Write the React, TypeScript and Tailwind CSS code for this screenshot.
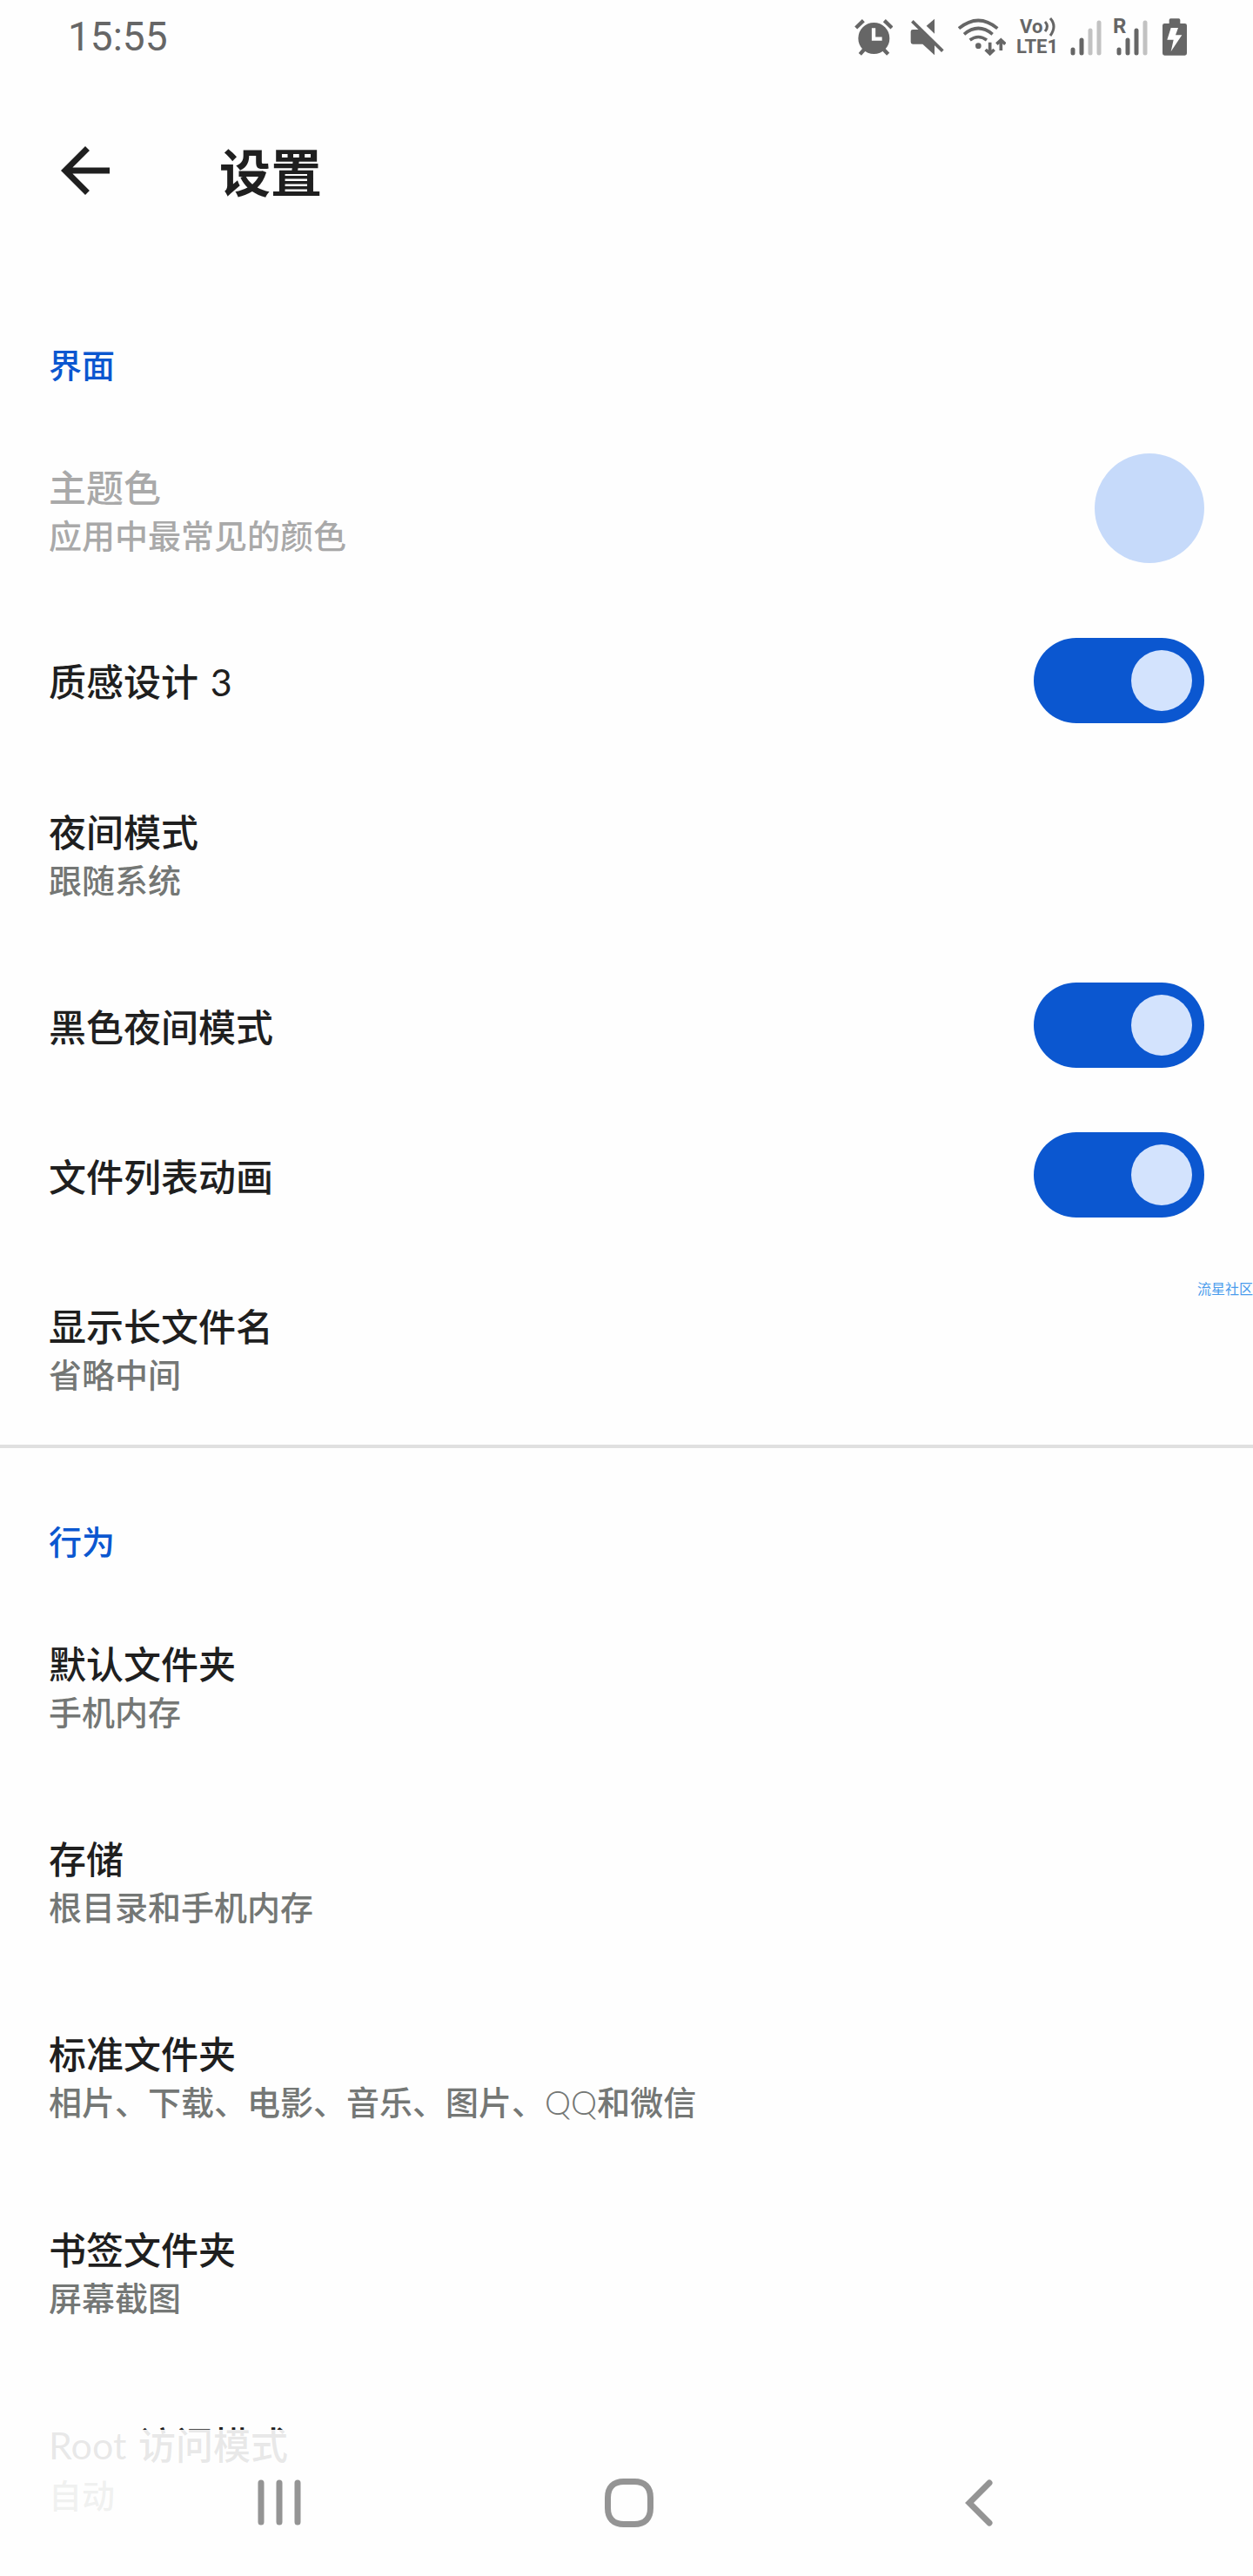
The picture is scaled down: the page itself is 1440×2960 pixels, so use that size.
import { useId, useState } from "react";
import type { ReactNode } from "react";

/* ---------- status bar ---------- */

function AlarmIcon() {
  return (
    <svg className="h-[45px] w-[44px]" viewBox="59 57 132 135" aria-label="闹钟">
      <circle cx="126" cy="129" r="54" fill="#666" />
      <g stroke="#666" strokeWidth="13" fill="none">
        <path d="M64 93 L90 68M188 93 L162 68" />
        <path d="M78 184 L92 168M175 184 L160 168" />
      </g>
      <path d="M125 94V131H154" stroke="#fefefe" strokeWidth="13" fill="none" />
    </svg>
  );
}

function MuteIcon() {
  return (
    <svg className="h-[45px] w-[39px]" viewBox="253 57 117 135" aria-label="静音">
      <path d="M262 99H284L337 151V187L296 149H262Q255 149 255 142V106Q255 99 262 99Z" fill="#666" />
      <path d="M337 62V113L309 86Z" fill="#666" />
      <path d="M260 70L365 173" stroke="#666" strokeWidth="11" />
    </svg>
  );
}

function WifiIcon() {
  return (
    <svg className="h-[45px] w-[55px]" viewBox="420 57 165 135" aria-label="无线网络">
      <g stroke="#666" strokeWidth="11" fill="none">
        <path d="M423 95Q490 40 556 95" />
        <path d="M441 115Q490 74 539 115" />
        <path d="M461 135Q490 114 519 135" />
        <path d="M530 143V180M515 168L530 182L545 168" />
        <path d="M568 171V136M553 149L568 135L583 149" />
      </g>
      <circle cx="490" cy="155" r="10" fill="#666" />
    </svg>
  );
}

function VolteLabel() {
  return (
    <div className="flex w-[50px] flex-col font-[Roboto] text-[22px] leading-[23px] font-bold">
      <div className="flex items-center pl-1">
        <span>Vo</span>
        <svg className="h-[23px] w-[17px]" viewBox="0 0 17 23" fill="none" stroke="#666" strokeWidth="3">
          <path d="M3 6Q8 11 3 17" />
          <path d="M9 2Q17 11 9 22" />
        </svg>
      </div>
      <span>LTE1</span>
    </div>
  );
}

function SignalIcon({ level }: { level: number }) {
  const tops = [29, 18, 7, -2];
  return (
    <svg className="h-[45px] w-[37px]" viewBox="0 0 37 45" strokeWidth="5" strokeLinecap="round" aria-label="信号">
      {tops.map((top, i) => (
        <path
          key={top}
          d={`M${3 + i * 10} ${top + 8}V41`}
          stroke={i < level ? "#666" : "#c2c2c2"}
        />
      ))}
    </svg>
  );
}

function BatteryIcon() {
  return (
    <svg className="h-[45px] w-[28px]" viewBox="1128 57 84 135" aria-label="正在充电">
      <path
        d="M1151 78V66Q1151 61 1156 61H1184Q1189 61 1189 66V78H1205Q1212 78 1212 85V181Q1212 188 1205 188H1135Q1128 188 1128 181V85Q1128 78 1135 78Z"
        fill="#666"
      />
      <path d="M1157 93H1182L1173 118H1195L1157 175L1166 134H1144Z" fill="#fefefe" />
    </svg>
  );
}

function StatusBar() {
  return (
    <div className="flex h-21 items-center justify-between pr-[76px] pl-[78px] text-[#666]">
      <time className="font-[Roboto] text-[46px] leading-none">15:55</time>
      <div className="flex items-center">
        <AlarmIcon />
        <div className="ml-5">
          <MuteIcon />
        </div>
        <div className="ml-4">
          <WifiIcon />
        </div>
        <div className="ml-3">
          <VolteLabel />
        </div>
        <div className="ml-3">
          <SignalIcon level={2} />
        </div>
        <div className="relative ml-4">
          <span className="absolute -top-1 -left-1 font-[Roboto] text-[24px] leading-[28px] font-bold">R</span>
          <SignalIcon level={3} />
        </div>
        <div className="ml-4">
          <BatteryIcon />
        </div>
      </div>
    </div>
  );
}

/* ---------- preference list ---------- */

function Latin({ children }: { children: ReactNode }) {
  return <span className="mx-1 font-[Lato] font-normal first:ml-0">{children}</span>;
}

function RowText({ title, summary, disabled }: { title: ReactNode; summary?: ReactNode; disabled?: boolean }) {
  return (
    <span className="flex min-w-0 flex-1 flex-col">
      <span className={`text-[43px] leading-[60px] font-medium ${disabled ? "text-[#a9a9a9]" : "text-[#1f1f1f]"}`}>
        {title}
      </span>
      {summary && (
        <span className={`text-[38px] leading-[52px] font-medium ${disabled ? "text-[#a9a9a9]" : "text-[#747775]"}`}>
          {summary}
        </span>
      )}
    </span>
  );
}

function Row(props: { title: ReactNode; summary: ReactNode; disabled?: boolean; children?: ReactNode }) {
  return (
    <button type="button" disabled={props.disabled} className="flex w-full items-center px-14 py-14 text-left">
      <RowText title={props.title} summary={props.summary} disabled={props.disabled} />
      {props.children}
    </button>
  );
}

function SwitchRow({ title }: { title: ReactNode }) {
  const id = useId();
  const [on, setOn] = useState(true);
  return (
    <label htmlFor={id} className="flex min-h-[172px] items-center px-14">
      <RowText title={title} />
      <input
        id={id}
        type="checkbox"
        role="switch"
        checked={on}
        onChange={(e) => setOn(e.target.checked)}
        className="flex h-[98px] w-[196px] shrink-0 appearance-none items-center rounded-full bg-[#e1e3e1] px-3.5 before:size-[70px] before:rounded-full before:bg-[#747775] checked:justify-end checked:bg-[#0b57d0] checked:before:bg-[#d3e3fd]"
      />
    </label>
  );
}

function SectionTitle({ children }: { children: ReactNode }) {
  return (
    <h2 className="px-14 pt-20 pb-7 text-[38px] leading-[52px] font-medium text-[#0b57d0]">{children}</h2>
  );
}

/* ---------- system navigation ---------- */

function NavigationBar() {
  return (
    <nav className="fixed inset-x-0 bottom-0 grid h-42 grid-cols-3 bg-[#fefefe]/90 pr-[114px] pl-[120px]">
      <button type="button" aria-label="最近任务" className="flex items-center justify-center">
        <svg className="h-14 w-14" viewBox="0 0 56 56" stroke="#949494" strokeWidth="7" strokeLinecap="round">
          <path d="M7 5V50M28 5V50M49 5V50" />
        </svg>
      </button>
      <button type="button" aria-label="主屏幕" className="flex items-center justify-center">
        <svg className="h-14 w-14" viewBox="0 0 56 56" fill="none" stroke="#949494" strokeWidth="7">
          <path d="M28 3.500H34C46 3.500 52.500 10 52.500 22V34C52.500 46 46 52.500 34 52.500H22C10 52.500 3.500 46 3.500 34V22C3.500 10 10 3.500 22 3.500Z" />
        </svg>
      </button>
      <button type="button" aria-label="返回" className="flex items-center justify-center">
        <svg className="h-14 w-14" viewBox="0 0 56 56" fill="none" stroke="#949494" strokeWidth="7" strokeLinecap="round">
          <path d="M40 5L17 28L40 51" />
        </svg>
      </button>
    </nav>
  );
}

export default function App() {
  return (
    <div
      lang="zh-CN"
      className="min-h-screen overflow-x-hidden bg-[#fefefe] font-['Noto_Sans_CJK_SC',sans-serif] text-[#1f1f1f]"
    >
      <StatusBar />
      <header className="flex h-56 items-center gap-28 px-14">
        <button type="button" aria-label="返回">
          <svg className="size-21" viewBox="0 0 24 24" fill="#1f1f1f">
            <path d="M20 11H7.830l5.590-5.590L12 4l-8 8 8 8 1.410-1.410L7.830 13H20z" />
          </svg>
        </button>
        <h1 className="text-[59px] leading-[80px] font-bold">设置</h1>
      </header>

      <main className="pt-1">
        <section>
          <SectionTitle>界面</SectionTitle>
          <Row title="主题色" summary="应用中最常见的颜色" disabled>
            <span className="-my-2 size-[126px] shrink-0 rounded-full bg-[#c6dafa]" />
          </Row>
          <SwitchRow
            title={
              <>
                <span>质感设计</span> <Latin>3</Latin>
              </>
            }
          />
          <Row title="夜间模式" summary="跟随系统" />
          <SwitchRow title="黑色夜间模式" />
          <SwitchRow title="文件列表动画" />
          <div className="relative">
            <Row title="显示长文件名" summary="省略中间" />
            <span className="absolute top-8 right-0 text-[16px] leading-6 whitespace-nowrap text-[#4a9cec]">
              流星社区
            </span>
          </div>
        </section>

        <section className="border-t-4 border-[#e0e0e0]">
          <SectionTitle>行为</SectionTitle>
          <Row title="默认文件夹" summary="手机内存" />
          <Row title="存储" summary="根目录和手机内存" />
          <Row
            title="标准文件夹"
            summary={
              <>
                相片、下载、电影、音乐、图片、<span className="font-[Lato] font-light">QQ</span>和微信
              </>
            }
          />
          <Row title="书签文件夹" summary="屏幕截图" />
          <Row
            title={
              <>
                <Latin>Root</Latin> 访问模式
              </>
            }
            summary="自动"
          />
        </section>
      </main>
      <NavigationBar />
    </div>
  );
}
